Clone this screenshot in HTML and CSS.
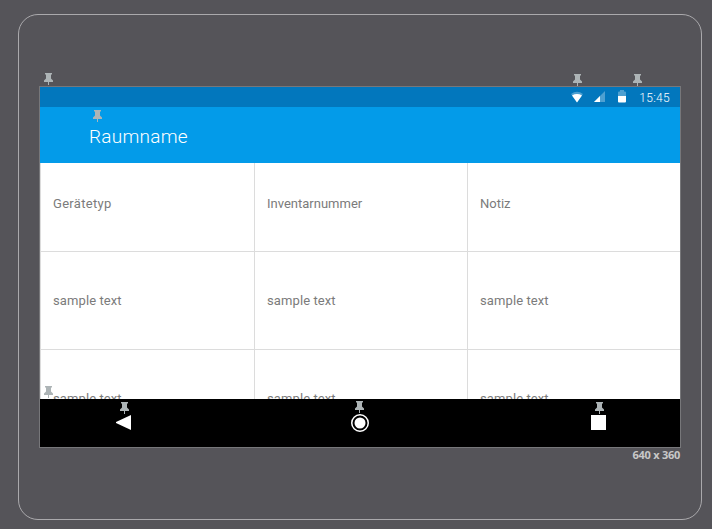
FILE: index.html
```html
<!DOCTYPE html>
<html lang="de">
<head>
<meta charset="utf-8">
<title>Raumname</title>
<link rel="stylesheet" href="styles.css">
</head>
<body>
<svg width="0" height="0" class="defs">
  <symbol id="pin" viewBox="0 0 9 13">
    <path d="M1 0h7v1.500h-1v4l2 2V9H0V7.500l2-2v-4H1z"/>
    <path d="M4 9h1v3H4z"/>
  </symbol>
</svg>
<div class="device">
  <main class="screen">
    <header class="status">
      <svg class="wifi" width="14" height="12" viewBox="0 0 14 12">
        <path class="dim" d="M1 3Q7-1.500 13 3L7 11z"/>
        <path d="M2 4.500Q7 1.600 12 4.500L7 11.500z"/>
      </svg>
      <svg class="signal" width="11" height="11" viewBox="0 0 11 11">
        <path class="dim" d="M11 0v11H0z"/>
        <path d="M6 5v6H0z"/>
      </svg>
      <svg class="battery" width="8" height="13" viewBox="0 0 8 13">
        <path class="dim" d="M0 6V2.500Q0 1.500 1 1.500h1V0h4v1.500h1q1 0 1 1V6z"/>
        <path d="M0 6h8v5.500q0 1-1 1H1q-1 0-1-1z"/>
      </svg>
      <span class="time">15:45</span>
    </header>
    <div class="appbar">Raumname</div>
    <div class="table">
      <div class="cell head wide">Gerätetyp</div><div class="cell head">Inventarnummer</div><div class="cell head">Notiz</div>
      <div class="cell">sample text</div><div class="cell">sample text</div><div class="cell">sample text</div>
      <div class="cell">sample text</div><div class="cell">sample text</div><div class="cell">sample text</div>
    </div>
    <nav class="navbar">
      <svg class="back" width="15" height="15" viewBox="0 0 15 15"><path d="M15 0v15L0 8V7z"/></svg>
      <svg class="home" width="18" height="18" viewBox="0 0 18 18"><circle class="ring" cx="9" cy="9" r="8.250"/><circle cx="9" cy="9" r="5.500"/></svg>
      <svg class="recent" width="15" height="15" viewBox="0 0 15 15"><path d="M0 0h15v15H0z"/></svg>
    </nav>
    <svg class="pin pin-status"><use href="#pin"/></svg>
    <svg class="pin pin-wifi"><use href="#pin"/></svg>
    <svg class="pin pin-time"><use href="#pin"/></svg>
    <svg class="pin pin-title"><use href="#pin"/></svg>
    <svg class="pin pin-table"><use href="#pin"/></svg>
    <svg class="pin pin-back"><use href="#pin"/></svg>
    <svg class="pin pin-home"><use href="#pin"/></svg>
    <svg class="pin pin-recent"><use href="#pin"/></svg>
  </main>
  <div class="size">640 x 360</div>
</div>
</body>
</html>
```
FILE: styles.css
```css
* { box-sizing: border-box; }
body {
  margin: 0;
  padding: 14px 10px 9px 18px;
  height: 529px;
  overflow: hidden;
  background: #555459;
  font-family: Roboto, sans-serif;
}
.defs { position: absolute; }
.device {
  width: 684px;
  height: 506px;
  padding: 71px 20px 0;
  border: 1px solid #aaa9ac;
  border-radius: 20px;
}
.screen {
  position: relative;
  width: 642px;
  height: 362px;
  border: 1px solid #77777a;
  display: flex;
  flex-direction: column;
  background: #fff;
}
.status {
  height: 20px;
  flex: none;
  display: flex;
  align-items: center;
  justify-content: flex-end;
  padding-right: 10px;
  background: #0277bd;
  fill: #fff;
}
.dim { opacity: .3; }
.wifi { margin-right: 10px; }
.signal { margin: 0 13px 1px 0; }
.battery { margin: 0 13px 1px 0; }
.time {
  color: #fff;
  font-size: 12px;
  font-weight: 300;
  line-height: 20px;
  letter-spacing: .3px;
  padding-top: 2px;
}
.appbar {
  height: 56px;
  flex: none;
  padding: 2px 0 0 49px;
  background: #039be9;
  color: #fff;
  font-size: 19px;
  font-weight: 300;
  line-height: 56px;
  letter-spacing: .25px;
}
.table {
  height: 236px;
  flex: none;
  overflow: hidden;
  display: grid;
  grid-template-columns: 214px 213px 213px;
  grid-template-rows: 89px 98px 98px;
}
.cell {
  padding-left: 12px;
  border-left: 1px solid #dcdcdc;
  border-bottom: 1px solid #dcdcdc;
  color: #7b7b7b;
  font-size: 13px;
  line-height: 97px;
  letter-spacing: .1px;
}
.head { line-height: 82px; letter-spacing: 0; }
.wide { letter-spacing: .3px; }
.navbar {
  height: 48px;
  flex: none;
  display: flex;
  align-items: center;
  padding-bottom: 1px;
  background: #000;
  fill: #fff;
}
.back { margin-left: 76px; }
.home { margin-left: 220px; }
.recent { margin-left: 222px; }
.ring { fill: none; stroke: #fff; stroke-width: 1.500px; }
.pin {
  position: absolute;
  width: 9px;
  height: 13px;
  fill: #adb4b6;
}
.pin-status { left: 4px; top: -14px; }
.pin-wifi { left: 533px; top: -13px; }
.pin-time { left: 593px; top: -13px; }
.pin-title { left: 53px; top: 23px; }
.pin-table { left: 4px; top: 299px; }
.pin-back { left: 80px; top: 315px; }
.pin-home { left: 315px; top: 314px; }
.pin-recent { left: 555px; top: 315px; }
.size {
  width: 641px;
  text-align: right;
  color: #c8c8c8;
  font: 700 11px/14px "Open Sans", sans-serif;
  letter-spacing: -.25px;
}
```
